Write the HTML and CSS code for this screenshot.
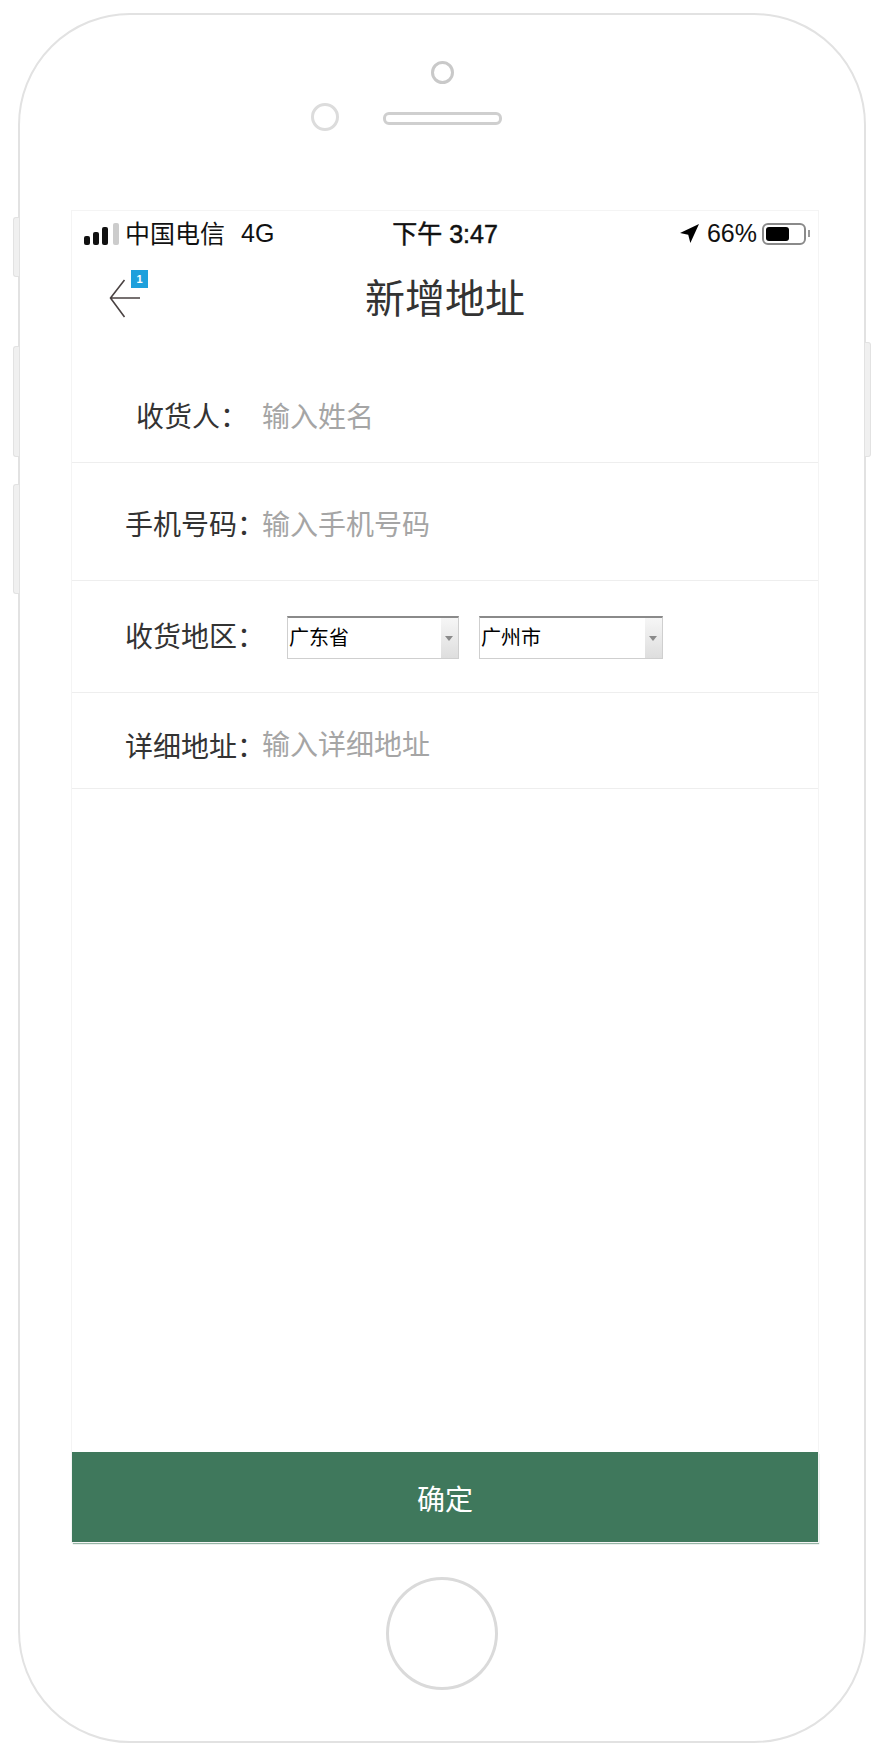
FILE: index.html
```html
<!DOCTYPE html>
<html lang="zh-CN">
<head>
  <meta charset="UTF-8">
  <meta name="viewport" content="width=device-width, initial-scale=1.0">
  <title>新增地址</title>
  <link rel="stylesheet" href="styles.css">
</head>
<body>
  <div class="phone">
    <!-- 侧边按键 -->
    <div class="side-key side-key-mute"></div>
    <div class="side-key side-key-up"></div>
    <div class="side-key side-key-down"></div>
    <div class="side-key side-key-power"></div>

    <div class="bezel-top">
      <div class="camera"></div>
      <div class="speaker-row">
        <div class="sensor"></div>
        <div class="speaker"></div>
      </div>
    </div>

    <div class="screen">
      <div class="status-bar">
        <div class="status-left">
          <div class="signal">
            <span class="signal-bar bar-1"></span>
            <span class="signal-bar bar-2"></span>
            <span class="signal-bar bar-3"></span>
            <span class="signal-bar bar-4"></span>
          </div>
          <span class="carrier">中国电信</span>
          <span class="network">4G</span>
        </div>
        <div class="status-time">下午 3:47</div>
        <div class="status-right">
          <svg class="location" width="19" height="19" viewBox="0 0 18 18">
            <path d="M18 0 L0 8.5 L7.8 10.2 L9.8 18 Z" fill="#000"/>
          </svg>
          <span class="percent">66%</span>
          <div class="battery"><div class="battery-fill"></div></div>
          <div class="battery-nub"></div>
        </div>
      </div>

      <div class="nav">
        <div class="back">
          <svg width="32" height="40" viewBox="0 0 32 40">
            <path d="M15.5 1 L1.5 19 L15.5 38 M1.5 19 L31 19" fill="none" stroke="#4a4242" stroke-width="1.6"/>
          </svg>
          <span class="badge">1</span>
        </div>
        <h1 class="title">新增地址</h1>
      </div>

      <div class="form-row row-name">
        <span class="label label-short">收货人：</span>
        <span class="placeholder">输入姓名</span>
      </div>
      <div class="form-row row-phone">
        <span class="label">手机号码：</span>
        <span class="placeholder">输入手机号码</span>
      </div>
      <div class="form-row row-area">
        <span class="label label-area">收货地区：</span>
        <div class="picker picker-province">
          <span class="picker-value">广东省</span>
          <span class="picker-arrow"></span>
        </div>
        <div class="picker picker-city">
          <span class="picker-value">广州市</span>
          <span class="picker-arrow"></span>
        </div>
      </div>
      <div class="form-row row-detail">
        <span class="label">详细地址：</span>
        <span class="placeholder placeholder-up">输入详细地址</span>
      </div>

      <div class="confirm">确定</div>
    </div>

    <div class="bezel-bottom">
      <div class="home-button"></div>
    </div>
  </div>
</body>
</html>
```

FILE: styles.css
```css
* {
  box-sizing: border-box;
}

body {
  margin: 0;
  background: #fff;
  font-family: "Noto Sans CJK SC", "Liberation Sans", sans-serif;
  color: #333;
}

/* 手机外框 */
.phone {
  position: relative;
  width: 848px;
  height: 1730px;
  margin: 13px 0 0 18px;
  border: 2px solid #e2e2e2;
  border-radius: 112px;
  background: #fff;
}

.side-key {
  position: absolute;
  left: -7px;
  width: 6px;
  border: 1px solid #e2e2e2;
  border-right: none;
  border-radius: 3px 0 0 3px;
  background: #f0f0f0;
}
.side-key-mute { top: 202px; height: 60px; }
.side-key-up { top: 331px; height: 111px; }
.side-key-down { top: 469px; height: 110px; }
.side-key-power {
  top: 327px;
  left: auto;
  right: -7px;
  height: 115px;
  border: 1px solid #e2e2e2;
  border-left: none;
  border-radius: 0 3px 3px 0;
}

.bezel-top {
  height: 196px;
  padding-top: 46px;
  display: flex;
  flex-direction: column;
  align-items: center;
}

.camera {
  width: 23px;
  height: 23px;
  border: 3px solid #c9c9c9;
  border-radius: 50%;
}

.speaker-row {
  display: grid;
  grid-template-columns: 1fr 119px 1fr;
  align-items: center;
  width: 400px;
  margin-top: 19px;
}

.sensor {
  grid-column: 1;
  justify-self: end;
  width: 28px;
  height: 28px;
  margin-right: 44px;
  border: 3px solid #dcdcdc;
  border-radius: 50%;
}

.speaker {
  grid-column: 2;
  height: 13px;
  margin-top: 2px;
  border: 3px solid #cfcfcf;
  border-radius: 6px;
}

/* 屏幕 */
.screen {
  display: flex;
  flex-direction: column;
  width: 746px;
  height: 1331px;
  margin-left: 52px;
  outline: 1px solid #f4f4f4;
  background: #fff;
}

.status-bar {
  display: grid;
  grid-template-columns: 1fr auto 1fr;
  align-items: center;
  height: 45px;
  font-family: "Liberation Sans", "Noto Sans CJK SC", sans-serif;
  font-size: 25px;
  color: #111;
}

.status-left {
  display: flex;
  align-items: center;
  padding-left: 12px;
}

.signal {
  display: flex;
  align-items: flex-end;
  gap: 3px;
  height: 22px;
  margin-right: 6px;
}

.signal-bar {
  width: 6px;
  border-radius: 2px;
  background: #111;
}
.bar-1 { height: 9px; }
.bar-2 { height: 13px; }
.bar-3 { height: 18px; }
.bar-4 { height: 22px; background: #ccc; margin-left: 2px; }

.carrier {
  margin-bottom: 4px;
}

.network {
  margin-left: 16px;
}

.status-time {
  margin-bottom: 3px;
  -webkit-text-stroke: 0.5px #111;
}

.status-right {
  display: flex;
  align-items: center;
  justify-content: flex-end;
  padding-right: 8px;
}

.location {
  margin-right: 8px;
}

.battery {
  width: 44px;
  height: 22px;
  margin-left: 5px;
  padding: 2px;
  border: 2px solid #8a8a8a;
  border-radius: 6px;
}

.battery-fill {
  width: 23px;
  height: 100%;
  border-radius: 3px;
  background: #000;
}

.battery-nub {
  width: 2px;
  height: 7px;
  margin-left: 2px;
  background: #999;
}

.nav {
  position: relative;
  height: 116px;
  padding-top: 15px;
}

.back {
  position: absolute;
  top: 23px;
  left: 37px;
  width: 32px;
  height: 40px;
}

.badge {
  position: absolute;
  top: -9px;
  left: 22px;
  width: 17px;
  height: 18px;
  background: #1ea0dc;
  color: #fff;
  font-family: "Liberation Sans", sans-serif;
  font-size: 11px;
  font-weight: 700;
  line-height: 18px;
  text-align: center;
}

.title {
  margin: 0;
  font-size: 40px;
  font-weight: 400;
  line-height: 50px;
  text-align: center;
  color: #333;
}

/* 表单 */
.form-row {
  display: flex;
  align-items: center;
  padding-left: 53px;
  border-bottom: 1px solid #eeeeee;
  font-size: 28px;
}

.row-name { height: 91px; padding-bottom: 4px; }
.row-phone { height: 118px; padding-top: 2px; }
.row-area { height: 112px; }
.row-detail { height: 96px; padding-top: 8px; }

.label {
  flex: none;
  width: 137px;
  white-space: nowrap;
  color: #333;
}

.label-short {
  padding-left: 11px;
}

.label-area {
  margin-bottom: 4px;
}

.placeholder {
  color: #a5a5a5;
}

.placeholder-up {
  margin-top: -4px;
}

.picker {
  display: flex;
  align-items: stretch;
  height: 43px;
  margin-top: 2px;
  border: 1px solid #cfcfcf;
  border-top: 2px solid #8a8a8a;
  background: #fff;
}

.picker-province {
  width: 172px;
  margin-left: 25px;
}

.picker-city {
  width: 184px;
  margin-left: 20px;
}

.picker-value {
  flex: 1;
  padding-left: 1px;
  font-size: 20px;
  line-height: 38px;
  color: #000;
}

.picker-arrow {
  position: relative;
  width: 17px;
  background: linear-gradient(to bottom, #f6f6f6, #dedede);
}

.picker-arrow::after {
  content: "";
  position: absolute;
  top: 18px;
  left: 4px;
  border-style: solid;
  border-width: 5px 4px 0;
  border-color: #8a8a8a transparent transparent;
}

.confirm {
  margin-top: auto;
  height: 90px;
  padding-top: 1px;
  background: #3f785c;
  box-shadow: 1px 2px 1px rgba(63, 120, 92, 0.55);
  color: #fff;
  font-size: 28px;
  line-height: 90px;
  text-align: center;
}

.bezel-bottom {
  display: flex;
  justify-content: center;
  padding-top: 35px;
}

.home-button {
  width: 112px;
  height: 113px;
  border: 3px solid #dadada;
  border-radius: 50%;
}
```
